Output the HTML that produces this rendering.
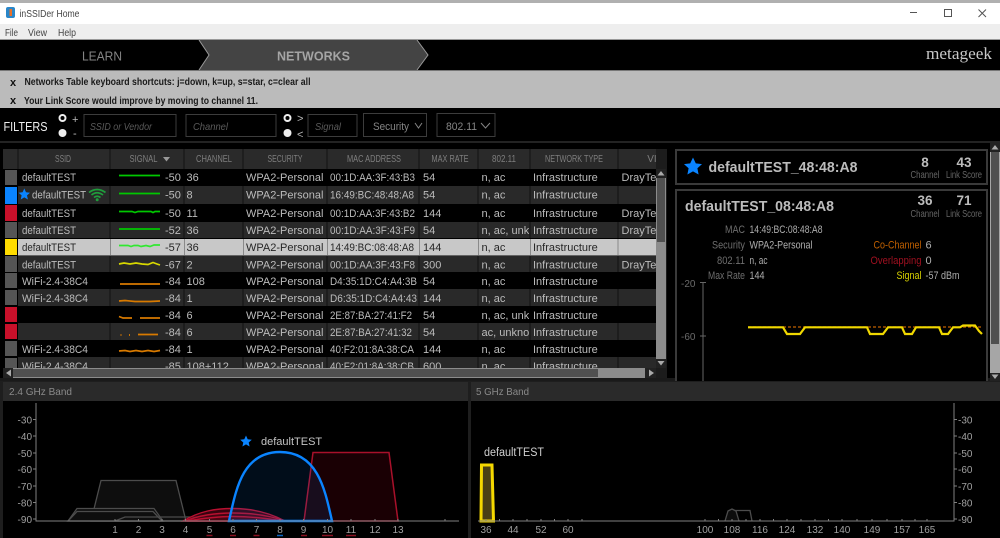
<!DOCTYPE html>
<html><head><meta charset="utf-8"><title>inSSIDer Home</title>
<style>
html,body{margin:0;padding:0;background:#000;width:1000px;height:538px;overflow:hidden}
svg{display:block;font-family:"Liberation Sans",sans-serif;filter:blur(.35px)}
.t{font-size:11px;fill:#bcbcbc}
.r5 .t{fill:#262626}
.h{font-size:10px;fill:#7e7e7e;text-anchor:middle}
.m{font-size:11px;fill:#6e6e6e;text-anchor:end}
.v{font-size:11px;fill:#aeaeae}
.c{font-size:10.5px;fill:#666;text-anchor:middle}
.n{font-size:13.5px;font-weight:bold;fill:#bcbcbc;text-anchor:middle}
.a{font-size:10px;fill:#a0a0a0}
.ar{font-size:10px;fill:#a0a0a0;text-anchor:end}
.x{font-size:10px;fill:#a0a0a0;text-anchor:middle}
.ph{font-size:10.5px;font-style:italic;fill:#5a5a5a}
</style></head><body>
<svg width="1000" height="538" viewBox="0 0 1000 538" xmlns="http://www.w3.org/2000/svg">
<defs>
<clipPath id="cm"><rect x="327" y="169" width="92" height="199"/></clipPath>
<clipPath id="cp"><rect x="478" y="169" width="51" height="199"/></clipPath>
<clipPath id="cv"><rect x="618" y="169" width="38" height="199"/></clipPath>
<clipPath id="ct"><rect x="3" y="149" width="653" height="219"/></clipPath>
</defs>
<rect width="1000" height="538" fill="#000"/>
<!-- title bar -->
<rect width="1000" height="3" fill="#b0b0b0"/>
<rect y="3" width="1000" height="21" fill="#fff"/>
<rect y="24" width="1000" height="15" fill="#eee"/>
<rect y="39" width="1000" height="1" fill="#999"/>
<rect x="6" y="7" width="9" height="11" rx="2" fill="#2a86c8"/>
<rect x="9.5" y="9" width="2.5" height="7" fill="#e8702a"/>
<text x="19.5" y="17" font-size="10.500" fill="#444" textLength="60" lengthAdjust="spacingAndGlyphs">inSSIDer Home</text>
<text x="5" y="36" font-size="10.500" fill="#444" textLength="13" lengthAdjust="spacingAndGlyphs">File</text>
<text x="28" y="36" font-size="10.500" fill="#444" textLength="19" lengthAdjust="spacingAndGlyphs">View</text>
<text x="58" y="36" font-size="10.500" fill="#444" textLength="18" lengthAdjust="spacingAndGlyphs">Help</text>
<path d="M910 12.500H917" stroke="#555" fill="none"/>
<rect x="944.500" y="9.500" width="7" height="7" stroke="#555" fill="none"/>
<path d="M978.500 9.500L986 17M986 9.500L978.500 17" stroke="#555" fill="none"/>
<!-- nav -->
<text x="82" y="60.500" font-size="12.500" fill="#858585" textLength="40" lengthAdjust="spacingAndGlyphs">LEARN</text>
<path d="M199 40H417L428 55L417 70H199L209 55Z" fill="#444"/>
<path d="M199 40L209 55L199 70M417 40L428 55L417 70" stroke="#999" fill="none"/>
<text x="277" y="60.500" font-size="12.500" font-weight="bold" fill="#a5a5a5" textLength="73" lengthAdjust="spacingAndGlyphs">NETWORKS</text>
<text x="926" y="59" font-family="Liberation Serif,serif" font-size="16.500" fill="#c8c8c8" textLength="66" lengthAdjust="spacingAndGlyphs">metageek</text>
<!-- notifications -->
<rect y="70" width="1000" height="1" fill="#777"/>
<rect y="71" width="1000" height="37" fill="#bbb"/>
<text x="10" y="86" font-size="11" font-weight="bold" fill="#111">x</text>
<text x="10" y="104" font-size="11" font-weight="bold" fill="#111">x</text>
<text x="24.500" y="85" font-size="10.500" font-weight="bold" fill="#1a1a1a" textLength="286" lengthAdjust="spacingAndGlyphs">Networks Table keyboard shortcuts: j=down, k=up, s=star, c=clear all</text>
<text x="24" y="104" font-size="10.500" font-weight="bold" fill="#1a1a1a" textLength="234" lengthAdjust="spacingAndGlyphs">Your Link Score would improve by moving to channel 11.</text>
<!-- filters -->
<text x="3.500" y="131" font-size="12.500" fill="#eee" textLength="44" lengthAdjust="spacingAndGlyphs">FILTERS</text>
<circle cx="62.500" cy="118" r="3" fill="#000" stroke="#eee" stroke-width="2"/>
<circle cx="62.500" cy="133" r="4" fill="#eee"/>
<text x="72" y="123" font-size="11" fill="#bbb">+</text>
<text x="73" y="137" font-size="11" fill="#bbb">-</text>
<rect x="84" y="114.500" width="92" height="22" fill="none" stroke="#3c3c3c"/>
<text x="90" y="130" class="ph" textLength="62" lengthAdjust="spacingAndGlyphs">SSID or Vendor</text>
<rect x="186" y="114.500" width="90" height="22" fill="none" stroke="#3c3c3c"/>
<text x="193" y="130" class="ph" textLength="35" lengthAdjust="spacingAndGlyphs">Channel</text>
<circle cx="287.500" cy="118" r="3" fill="#000" stroke="#eee" stroke-width="2"/>
<circle cx="287.500" cy="133" r="4" fill="#eee"/>
<text x="297" y="122" font-size="11" fill="#bbb">&gt;</text>
<text x="297" y="138" font-size="11" fill="#bbb">&lt;</text>
<rect x="308" y="114.500" width="49" height="22" fill="none" stroke="#3c3c3c"/>
<text x="315" y="130" class="ph" textLength="26" lengthAdjust="spacingAndGlyphs">Signal</text>
<rect x="363.500" y="113.500" width="63" height="23" fill="none" stroke="#3c3c3c"/>
<text x="373" y="130" font-size="11" fill="#858585" textLength="36" lengthAdjust="spacingAndGlyphs">Security</text>
<path d="M415 123L418.500 128L422 123" stroke="#858585" fill="none"/>
<rect x="437" y="113.500" width="58" height="23" fill="none" stroke="#3c3c3c"/>
<text x="446" y="130" font-size="11" fill="#858585" textLength="31" lengthAdjust="spacingAndGlyphs">802.11</text>
<path d="M481 123L485.500 128L490 123" stroke="#858585" fill="none"/>
<rect y="141" width="1000" height="2" fill="#232323"/>
<!-- table -->
<rect x="3" y="149" width="664" height="232" fill="#1c1c1c"/>
<rect x="3" y="149" width="653" height="20" fill="#2a2a2a"/>
<path d="M18 149V169M110 149V169M184 149V169M243 149V169M327 149V169M419 149V169M478 149V169M530 149V169M618 149V169" stroke="#111" fill="none"/>
<text x="63" y="162" class="h" textLength="16" lengthAdjust="spacingAndGlyphs">SSID</text>
<text x="143.500" y="162" class="h" textLength="28" lengthAdjust="spacingAndGlyphs">SIGNAL</text>
<path d="M163 157H170L166.500 161.500Z" fill="#999"/>
<text x="214" y="162" class="h" textLength="36" lengthAdjust="spacingAndGlyphs">CHANNEL</text>
<text x="285" y="162" class="h" textLength="35" lengthAdjust="spacingAndGlyphs">SECURITY</text>
<text x="374" y="162" class="h" textLength="54" lengthAdjust="spacingAndGlyphs">MAC ADDRESS</text>
<text x="450" y="162" class="h" textLength="37" lengthAdjust="spacingAndGlyphs">MAX RATE</text>
<text x="504" y="162" class="h" textLength="24" lengthAdjust="spacingAndGlyphs">802.11</text>
<text x="574" y="162" class="h" textLength="58" lengthAdjust="spacingAndGlyphs">NETWORK TYPE</text>
<text x="652" y="162" class="h">VI</text>
<g>
<rect x="3" y="169" width="653" height="17" fill="#000"/>
<rect x="3" y="186" width="653" height="18" fill="#292929"/>
<rect x="3" y="204" width="653" height="18" fill="#000"/>
<rect x="3" y="222" width="653" height="16" fill="#292929"/>
<rect x="3" y="238" width="653" height="1" fill="#000"/>
<rect x="3" y="239" width="653" height="16.500" fill="#c8c8c8"/>
<rect x="3" y="255.500" width="653" height="1" fill="#000"/>
<rect x="3" y="256" width="653" height="16" fill="#292929"/>
<rect x="3" y="272" width="653" height="17" fill="#000"/>
<rect x="3" y="289" width="653" height="17" fill="#292929"/>
<rect x="3" y="306" width="653" height="17" fill="#000"/>
<rect x="3" y="323" width="653" height="17" fill="#292929"/>
<rect x="3" y="340" width="653" height="17" fill="#000"/>
<rect x="3" y="357" width="653" height="11" fill="#292929"/>
<rect x="3" y="169" width="15" height="199" fill="#000"/>
<path d="M110 186V204M184 186V204M243 186V204M327 186V204M419 186V204M478 186V204M530 186V204M618 186V204M110 222V238M184 222V238M243 222V238M327 222V238M419 222V238M478 222V238M530 222V238M618 222V238M110 256V272M184 256V272M243 256V272M327 256V272M419 256V272M478 256V272M530 256V272M618 256V272M110 289V306M184 289V306M243 289V306M327 289V306M419 289V306M478 289V306M530 289V306M618 289V306M110 323V340M184 323V340M243 323V340M327 323V340M419 323V340M478 323V340M530 323V340M618 323V340M110 357V368M184 357V368M243 357V368M327 357V368M419 357V368M478 357V368M530 357V368M618 357V368" stroke="#111" fill="none"/>
<path d="M110.500 239V255M184.500 239V255M243.500 239V255M327.500 239V255M419.500 239V255M478.500 239V255M530.500 239V255M618 239V255" stroke="#8a8a8a" fill="none"/>
<rect x="5" y="170" width="12" height="15" fill="#555"/>
<rect x="5" y="187" width="12" height="17" fill="#0a84ff"/>
<rect x="5" y="205" width="12" height="16" fill="#c8102a"/>
<rect x="5" y="222" width="12" height="16" fill="#555"/>
<rect x="5" y="239" width="12" height="16" fill="#ffdc00"/>
<rect x="5" y="256" width="12" height="16" fill="#555"/>
<rect x="5" y="273" width="12" height="15" fill="#555"/>
<rect x="5" y="290" width="12" height="15" fill="#555"/>
<rect x="5" y="307" width="12" height="15" fill="#c8102a"/>
<rect x="5" y="324" width="12" height="15" fill="#c8102a"/>
<rect x="5" y="341" width="12" height="15" fill="#555"/>
<rect x="5" y="358" width="12" height="10" fill="#555"/>
</g>
<!-- sparklines -->
<g fill="none" stroke-width="1.700">
<path d="M119 175.500H160" stroke="#00c800"/>
<path d="M119 193.500H160" stroke="#00c800"/>
<path d="M119 211.500H132L135 212.500L138 211.500H151L153 212.500L155 211.500H160" stroke="#00c800"/>
<path d="M119 229H160" stroke="#00c800"/>
<path d="M119 245.500H128L131 246.500L134 245.500H138L141 246.500L146 245.500L150 246.500L154 245H160" stroke="#30e830"/>
<path d="M119 264L124 263L130 264L136 263L142 264L148 264.500L153 262.500L157 264L160 265" stroke="#d8d800"/>
<path d="M120 284H160" stroke="#d87a00"/>
<path d="M119 301L125 300.500L135 301.500H150L160 301" stroke="#d87a00"/>
<path d="M119 316.500L123 318H132M140 318H160" stroke="#d87a00"/>
<path d="M138 334.500H158" stroke="#d87a00"/>
<path d="M120.500 335H121.500M129 335H130" stroke="#d87a00"/>
<path d="M119 351L125 350.500L130 351.500L136 350.500L142 351.500L148 350.500L154 351.500L160 350.500" stroke="#d87a00"/>
</g>
<g clip-path="url(#ct)">
<text x="22" y="181" class="t" textLength="54" lengthAdjust="spacingAndGlyphs">defaultTEST</text>
<path d="M24.300 188.500L26 192.300L30 192.700L27 195.400L27.900 199.500L24.300 197.400L20.700 199.500L21.600 195.400L18.600 192.700L22.600 192.300Z" fill="#0a84ff"/>
<text x="32" y="198.500" class="t" textLength="54" lengthAdjust="spacingAndGlyphs">defaultTEST</text>
<path d="M89 192.500Q97 186.500 105.500 192.500M91.500 195Q97 190.500 103 195M94 197.500Q97 195 100.500 197.500" stroke="#1f9d3c" stroke-width="1.700" fill="none"/>
<circle cx="97.200" cy="199.800" r="1.500" fill="#1f9d3c"/>
<text x="22" y="217" class="t" textLength="54" lengthAdjust="spacingAndGlyphs">defaultTEST</text>
<text x="22" y="234" class="t" textLength="54" lengthAdjust="spacingAndGlyphs">defaultTEST</text>
<text x="22" y="268.500" class="t" textLength="54" lengthAdjust="spacingAndGlyphs">defaultTEST</text>
<text x="22" y="285" class="t" textLength="66" lengthAdjust="spacingAndGlyphs">WiFi-2.4-38C4</text>
<text x="22" y="302" class="t" textLength="66" lengthAdjust="spacingAndGlyphs">WiFi-2.4-38C4</text>
<text x="22" y="353" class="t" textLength="66" lengthAdjust="spacingAndGlyphs">WiFi-2.4-38C4</text>
<text x="22" y="370" class="t" textLength="66" lengthAdjust="spacingAndGlyphs">WiFi-2.4-38C4</text>
<g class="r5"><text x="22" y="251" class="t" textLength="54" lengthAdjust="spacingAndGlyphs">defaultTEST</text></g>
<!-- signal + channel + security -->
<text x="165" y="181" class="t">-50</text><text x="186.500" y="181" class="t">36</text><text x="246" y="181" class="t">WPA2-Personal</text>
<text x="165" y="198.500" class="t">-50</text><text x="186.500" y="198.500" class="t">8</text><text x="246" y="198.500" class="t">WPA2-Personal</text>
<text x="165" y="217" class="t">-50</text><text x="186.500" y="217" class="t">11</text><text x="246" y="217" class="t">WPA2-Personal</text>
<text x="165" y="234" class="t">-52</text><text x="186.500" y="234" class="t">36</text><text x="246" y="234" class="t">WPA2-Personal</text>
<text x="165" y="268.500" class="t">-67</text><text x="186.500" y="268.500" class="t">2</text><text x="246" y="268.500" class="t">WPA2-Personal</text>
<text x="165" y="285" class="t">-84</text><text x="186.500" y="285" class="t">108</text><text x="246" y="285" class="t">WPA2-Personal</text>
<text x="165" y="302" class="t">-84</text><text x="186.500" y="302" class="t">1</text><text x="246" y="302" class="t">WPA2-Personal</text>
<text x="165" y="319" class="t">-84</text><text x="186.500" y="319" class="t">6</text><text x="246" y="319" class="t">WPA2-Personal</text>
<text x="165" y="336" class="t">-84</text><text x="186.500" y="336" class="t">6</text><text x="246" y="336" class="t">WPA2-Personal</text>
<text x="165" y="353" class="t">-84</text><text x="186.500" y="353" class="t">1</text><text x="246" y="353" class="t">WPA2-Personal</text>
<text x="165" y="370" class="t">-85</text><text x="186.500" y="370" class="t">108+112</text><text x="246" y="370" class="t">WPA2-Personal</text>
<g class="r5"><text x="165" y="251" class="t">-57</text><text x="186.500" y="251" class="t">36</text><text x="246" y="251" class="t">WPA2-Personal</text></g>
<!-- MAC -->
<g clip-path="url(#cm)">
<text x="330" y="181" class="t" textLength="85" lengthAdjust="spacingAndGlyphs">00:1D:AA:3F:43:B3</text>
<text x="330" y="198.500" class="t" textLength="84" lengthAdjust="spacingAndGlyphs">16:49:BC:48:48:A8</text>
<text x="330" y="217" class="t" textLength="85" lengthAdjust="spacingAndGlyphs">00:1D:AA:3F:43:B2</text>
<text x="330" y="234" class="t" textLength="85" lengthAdjust="spacingAndGlyphs">00:1D:AA:3F:43:F9</text>
<text x="330" y="268.500" class="t" textLength="85" lengthAdjust="spacingAndGlyphs">00:1D:AA:3F:43:F8</text>
<text x="330" y="285" class="t" textLength="87" lengthAdjust="spacingAndGlyphs">D4:35:1D:C4:A4:3B</text>
<text x="330" y="302" class="t" textLength="87" lengthAdjust="spacingAndGlyphs">D6:35:1D:C4:A4:43</text>
<text x="330" y="319" class="t" textLength="82" lengthAdjust="spacingAndGlyphs">2E:87:BA:27:41:F2</text>
<text x="330" y="336" class="t" textLength="82" lengthAdjust="spacingAndGlyphs">2E:87:BA:27:41:32</text>
<text x="330" y="353" class="t" textLength="84" lengthAdjust="spacingAndGlyphs">40:F2:01:8A:38:CA</text>
<text x="330" y="370" class="t" textLength="84" lengthAdjust="spacingAndGlyphs">40:F2:01:8A:38:CB</text>
<g class="r5"><text x="330" y="251" class="t" textLength="84" lengthAdjust="spacingAndGlyphs">14:49:BC:08:48:A8</text></g>
</g>
<!-- rate -->
<text x="423" y="181" class="t">54</text><text x="423" y="198.500" class="t">54</text><text x="423" y="217" class="t">144</text><text x="423" y="234" class="t">54</text><text x="423" y="268.500" class="t">300</text><text x="423" y="285" class="t">54</text><text x="423" y="302" class="t">144</text><text x="423" y="319" class="t">54</text><text x="423" y="336" class="t">54</text><text x="423" y="353" class="t">144</text><text x="423" y="370" class="t">600</text>
<g class="r5"><text x="423" y="251" class="t">144</text></g>
<!-- 802.11 -->
<g clip-path="url(#cp)">
<text x="481.500" y="181" class="t">n, ac</text><text x="481.500" y="198.500" class="t">n, ac</text><text x="481.500" y="217" class="t">n, ac</text><text x="481.500" y="234" class="t">n, ac, unknown</text><text x="481.500" y="268.500" class="t">n, ac</text><text x="481.500" y="285" class="t">n, ac</text><text x="481.500" y="302" class="t">n, ac</text><text x="481.500" y="319" class="t">n, ac, unknown</text><text x="481.500" y="336" class="t">ac, unknown</text><text x="481.500" y="353" class="t">n, ac</text><text x="481.500" y="370" class="t">n, ac</text>
<g class="r5"><text x="481.500" y="251" class="t">n, ac</text></g>
</g>
<!-- type -->
<text x="533" y="181" class="t">Infrastructure</text><text x="533" y="198.500" class="t">Infrastructure</text><text x="533" y="217" class="t">Infrastructure</text><text x="533" y="234" class="t">Infrastructure</text><text x="533" y="268.500" class="t">Infrastructure</text><text x="533" y="285" class="t">Infrastructure</text><text x="533" y="302" class="t">Infrastructure</text><text x="533" y="319" class="t">Infrastructure</text><text x="533" y="336" class="t">Infrastructure</text><text x="533" y="353" class="t">Infrastructure</text><text x="533" y="370" class="t">Infrastructure</text>
<g class="r5"><text x="533" y="251" class="t">Infrastructure</text></g>
<!-- vendor -->
<g clip-path="url(#cv)">
<text x="621.500" y="181" class="t">DrayTek Corp</text><text x="621.500" y="217" class="t">DrayTek Corp</text><text x="621.500" y="234" class="t">DrayTek Corp</text><text x="621.500" y="268.500" class="t">DrayTek Corp</text>
</g>
</g>
<!-- table scrollbars -->
<rect x="656" y="149" width="11" height="20" fill="#1c1c1c"/>
<rect x="656" y="169" width="10" height="199" fill="#8c8c8c"/>
<rect x="656" y="169" width="10" height="9" fill="#222"/>
<path d="M657.500 175.500H664.500L661 171Z" fill="#aaa"/>
<rect x="657" y="178" width="8" height="64" fill="#505050"/>
<rect x="656" y="359" width="10" height="9" fill="#222"/>
<path d="M657.500 361H664.500L661 365.500Z" fill="#aaa"/>
<rect x="3" y="368" width="664" height="10" fill="#8c8c8c"/>
<rect x="3" y="368" width="10" height="10" fill="#222"/>
<path d="M11 369.500V376.500L6 373Z" fill="#aaa"/>
<rect x="13" y="369" width="585" height="8" fill="#505050"/>
<rect x="645" y="368" width="11" height="10" fill="#222"/>
<path d="M649 369.500V376.500L654 373Z" fill="#aaa"/>
<rect x="656" y="368" width="11" height="10" fill="#1c1c1c"/>
<rect y="378" width="1000" height="5" fill="#1a1a1a"/>
<!-- right panels -->
<rect x="676" y="150" width="311" height="34" fill="#000" stroke="#3a3a3a" stroke-width="2"/>
<rect x="676" y="190" width="311" height="193" fill="#000" stroke="#3a3a3a" stroke-width="2"/>
<path d="M693 157.500L695.800 163.400L702 164.100L697.400 168.300L698.600 174.500L693 171.400L687.400 174.500L688.600 168.300L684 164.100L690.200 163.400Z" fill="#0a84ff"/>
<text x="708.500" y="172" font-size="15" font-weight="bold" fill="#bcbcbc" textLength="149" lengthAdjust="spacingAndGlyphs">defaultTEST_48:48:A8</text>
<text x="925" y="167" class="n">8</text><text x="964" y="167" class="n">43</text>
<text x="925" y="178" class="c" textLength="29" lengthAdjust="spacingAndGlyphs">Channel</text><text x="964" y="178" class="c" textLength="36" lengthAdjust="spacingAndGlyphs">Link Score</text>
<text x="685" y="211" font-size="15" font-weight="bold" fill="#bcbcbc" textLength="149" lengthAdjust="spacingAndGlyphs">defaultTEST_08:48:A8</text>
<text x="925" y="205" class="n">36</text><text x="964" y="205" class="n">71</text>
<text x="925" y="217" class="c" textLength="29" lengthAdjust="spacingAndGlyphs">Channel</text><text x="964" y="217" class="c" textLength="36" lengthAdjust="spacingAndGlyphs">Link Score</text>
<text x="745" y="233" class="m" textLength="20" lengthAdjust="spacingAndGlyphs">MAC</text><text x="749.500" y="233" class="v" textLength="73" lengthAdjust="spacingAndGlyphs">14:49:BC:08:48:A8</text>
<text x="745" y="248.500" class="m" textLength="33" lengthAdjust="spacingAndGlyphs">Security</text><text x="749.500" y="248.500" class="v" textLength="63" lengthAdjust="spacingAndGlyphs">WPA2-Personal</text>
<text x="745" y="264" class="m" textLength="28" lengthAdjust="spacingAndGlyphs">802.11</text><text x="749.500" y="264" class="v" textLength="18" lengthAdjust="spacingAndGlyphs">n, ac</text>
<text x="745" y="279" class="m" textLength="37" lengthAdjust="spacingAndGlyphs">Max Rate</text><text x="749.500" y="279" class="v" textLength="15" lengthAdjust="spacingAndGlyphs">144</text>
<text x="921.500" y="248.500" font-size="11" text-anchor="end" fill="#c06000" textLength="48" lengthAdjust="spacingAndGlyphs">Co-Channel</text><text x="925.500" y="248.500" class="v">6</text>
<text x="921.500" y="264" font-size="11" text-anchor="end" fill="#a01020" textLength="51" lengthAdjust="spacingAndGlyphs">Overlapping</text><text x="925.500" y="264" class="v">0</text>
<text x="921.500" y="279" font-size="11" text-anchor="end" fill="#d8d000" textLength="25" lengthAdjust="spacingAndGlyphs">Signal</text><text x="925.500" y="279" class="v" textLength="34" lengthAdjust="spacingAndGlyphs">-57 dBm</text>
<path d="M703 282V381M700 282.500H706M700 336H706" stroke="#666" fill="none"/>
<text x="681" y="287" font-size="10" fill="#6a6a6a">-20</text>
<text x="681" y="340" font-size="10" fill="#6a6a6a">-60</text>
<path d="M748 327H982" stroke="#c06000" stroke-width="1.200" stroke-dasharray="3 2" fill="none"/>
<path d="M748 327.300H783L787 334H800L805 327.300H867L870 334H883L888 327.300H902L905 334H912L916 327.300H939L942 334H948L953 327.300H960L963 325.500H975L979 331L982 334" stroke="#f0d800" stroke-width="2.200" fill="none"/>
<!-- right scrollbar -->
<rect x="990" y="143" width="10" height="238" fill="#a6a6a6"/>
<rect x="990" y="143" width="10" height="9" fill="#222"/>
<path d="M991.500 149.500H998.500L995 145Z" fill="#aaa"/>
<rect x="991" y="152" width="8" height="192" fill="#505050"/>
<rect x="990" y="373" width="10" height="8" fill="#222"/>
<path d="M991.500 374.500H998.500L995 379Z" fill="#aaa"/>
<!-- band panels -->
<rect y="381" width="1000" height="157" fill="#1e1e1e"/>
<rect x="3" y="383" width="465" height="155" fill="#000"/>
<rect x="3" y="382" width="465" height="19" fill="#2a2a2a"/>
<rect x="471" y="383" width="529" height="155" fill="#000"/>
<rect x="471" y="382" width="529" height="19" fill="#2a2a2a"/>
<text x="9" y="395" font-size="10.500" fill="#8a8a8a" textLength="63" lengthAdjust="spacingAndGlyphs">2.4 GHz Band</text>
<text x="476" y="395" font-size="10.500" fill="#8a8a8a" textLength="53" lengthAdjust="spacingAndGlyphs">5 GHz Band</text>
<!-- 2.4 chart -->
<g fill="#0e0e0e" stroke="#4c4c4c" stroke-width="1.300">
<path d="M91 521L101 480.500H176L186 521Z"/>
<path d="M68 521L77 508.500H154L163 521Z"/>
<path d="M68 521L77 511.500H153L162 521Z"/>
<path d="M115 521L125 517H205L212 521Z" fill="none"/>
</g>
<g fill="#4a0614" fill-opacity=".75" stroke="#b81030" stroke-width="1.400">
<path d="M183 521C200 511 215 508.500 233 508.500C250 508.500 268 512 285 521Z"/>
<path d="M185 521C200 515 215 513 233 513C250 513 268 515 285 521Z"/>
<path d="M187 521C205 518 218 516.500 233 516.500C250 516.500 265 518 283 521Z"/>
</g>
<path d="M304 521L313 452.500H389L398 521Z" fill="#1a0004" stroke="#a8102a" stroke-width="1.500"/>
<path d="M229 521C236 490 242 452 280 452C318 452 325 490 332 521Z" fill="#0a84ff" fill-opacity=".1" stroke="#0a84ff" stroke-width="2.400"/>
<path d="M36 403V521H459" stroke="#808080" fill="none"/>
<path d="M33 419.500H36M33 436H36M33 453H36M33 469H36M33 486H36M33 502.500H36M33 519H36M115 519V521M138.500 519V521M162 519V521M185.500 519V521M209.500 519V521M233 519V521M256.500 519V521M280 519V521M303.500 519V521M327.500 519V521M351 519V521M375 519V521M398 519V521M445 519V521" stroke="#808080" fill="none"/>
<text x="32" y="423.500" class="ar">-30</text><text x="32" y="440" class="ar">-40</text><text x="32" y="457" class="ar">-50</text><text x="32" y="473" class="ar">-60</text><text x="32" y="490" class="ar">-70</text><text x="32" y="506.500" class="ar">-80</text><text x="32" y="523" class="ar">-90</text>
<text x="115" y="533" class="x">1</text><text x="138.500" y="533" class="x">2</text><text x="162" y="533" class="x">3</text><text x="185.500" y="533" class="x">4</text><text x="209.500" y="533" class="x">5</text><text x="233" y="533" class="x">6</text><text x="256.500" y="533" class="x">7</text><text x="280" y="533" class="x">8</text><text x="303.500" y="533" class="x">9</text><text x="327.500" y="533" class="x">10</text><text x="351" y="533" class="x">11</text><text x="375" y="533" class="x">12</text><text x="398" y="533" class="x">13</text>
<path d="M206.500 535.500H212.500M230 535.500H236M253.500 535.500H259.500" stroke="#8a1020" stroke-width="1.500" fill="none"/>
<path d="M277 535.500H283" stroke="#0a64c0" stroke-width="1.500" fill="none"/>
<path d="M301 535.500H307M322 535.500H333M346 535.500H356" stroke="#8a1020" stroke-width="1.500" fill="none"/>
<path d="M246 435.500L247.700 439.300L251.800 439.700L248.700 442.500L249.600 446.500L246 444.400L242.400 446.500L243.300 442.500L240.200 439.700L244.300 439.300Z" fill="#0a84ff"/>
<text x="261" y="445" font-size="11" fill="#c4c4c4">defaultTEST</text>
<!-- 5 chart -->
<path d="M481 521L481.500 465H492L493.500 521Z" fill="#4a4014" stroke="#f5d800" stroke-width="3"/>
<path d="M725 521L728 511L732 509L736 511L739 521" fill="#0d0d0d" stroke="#4c4c4c" stroke-width="1.300"/>
<path d="M735 510.500H750L752 521" fill="none" stroke="#4c4c4c" stroke-width="1.300"/>
<path d="M478 521H954V403" stroke="#808080" fill="none"/>
<path d="M954 419.500H957M954 436H957M954 453H957M954 469H957M954 486H957M954 502.500H957M954 519H957M486 519V521M499.500 519V521M513 519V521M527 519V521M541 519V521M554.500 519V521M568 519V521M582 519V521M705 519V521M718.500 519V521M732 519V521M746 519V521M760 519V521M773.500 519V521M787 519V521M801 519V521M815 519V521M828.500 519V521M842 519V521M857 519V521M872 519V521M887 519V521M902 519V521M915 519V521M927 519V521" stroke="#808080" fill="none"/>
<text x="958" y="423.500" class="a">-30</text><text x="958" y="440" class="a">-40</text><text x="958" y="457" class="a">-50</text><text x="958" y="473" class="a">-60</text><text x="958" y="490" class="a">-70</text><text x="958" y="506.500" class="a">-80</text><text x="958" y="523" class="a">-90</text>
<text x="486" y="533" class="x">36</text><text x="513" y="533" class="x">44</text><text x="541" y="533" class="x">52</text><text x="568" y="533" class="x">60</text><text x="705" y="533" class="x">100</text><text x="732" y="533" class="x">108</text><text x="760" y="533" class="x">116</text><text x="787" y="533" class="x">124</text><text x="815" y="533" class="x">132</text><text x="842" y="533" class="x">140</text><text x="872" y="533" class="x">149</text><text x="902" y="533" class="x">157</text><text x="927" y="533" class="x">165</text>
<text x="484" y="456" font-size="11.500" fill="#d0d0d0" textLength="60" lengthAdjust="spacingAndGlyphs">defaultTEST</text>
</svg>
</body></html>
